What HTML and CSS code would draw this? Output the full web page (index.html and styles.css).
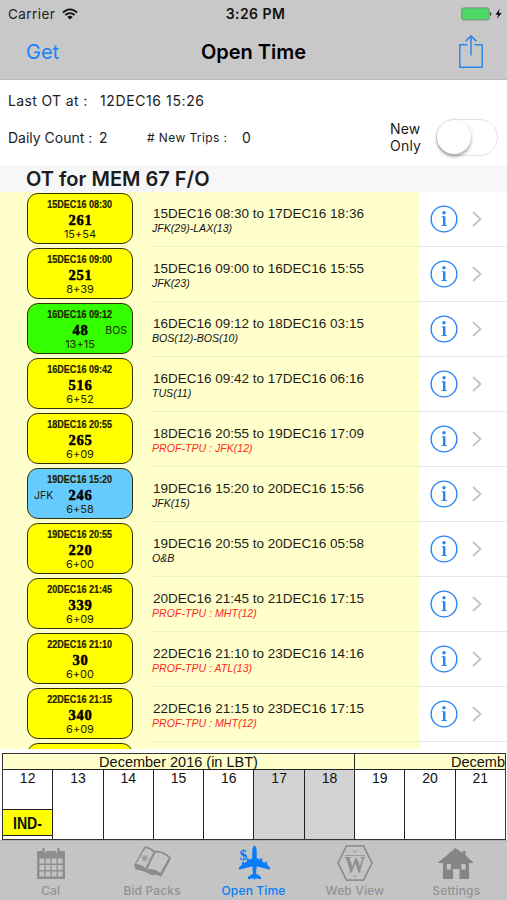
FILE: index.html
```html
<!DOCTYPE html>
<html lang="en">
<head>
    <meta charset="UTF-8">
    <meta name="viewport" content="width=device-width, initial-scale=1.0">
    <title>Open Time</title>
    <link rel="stylesheet" href="styles.css">
</head>
<body>
    <header class="top-bar">
        <div class="status-bar">
            <div class="carrier">
                <span>Carrier</span>
                <svg width="16" height="12" viewBox="0 0 16 12" fill="none" stroke="#111" stroke-width="1.9">
                    <path d="M1 4.6C5 .3 11 .3 15 4.6M3.4 7.1C6 4.4 10 4.4 12.6 7.1"/>
                    <path d="M8 11.6L5.3 8.9C6.8 7.4 9.2 7.4 10.7 8.9Z" fill="#111" stroke="none"/>
                </svg>
            </div>
            <span class="clock">3:26 PM</span>
            <div class="battery">
                <svg width="42" height="14" viewBox="0 0 42 14">
                    <rect x=".7" y=".9" width="27.4" height="12" rx="2" fill="#4bd864" stroke="#7f8a80"/>
                    <path d="M29.2 5v4c1.4-.3 1.6-3.7 0-4z" fill="#222"/>
                    <path d="M38.8 1.8L34.3 7.7h2.8L36 11.6L40.8 5.9h-3z" fill="#111"/>
                </svg>
            </div>
        </div>
        <div class="nav-bar">
            <a class="get-btn">Get</a>
            <h1>Open Time</h1>
            <a class="share-btn">
                <svg width="26" height="35" viewBox="0 0 26 35" fill="none" stroke="#2b86ec" stroke-width="1.5">
                    <path d="M9.5 9.7H1.8V32.3H24.2V9.7H16.5M13 20.5V1M7.6 6.3L13 .9L18.4 6.3"/>
                </svg>
            </a>
        </div>
    </header>

    <section class="summary">
        <div class="summary-row first">
            <span class="last-label">Last OT at :</span>
            <span class="last-value">12DEC16 15:26</span>
        </div>
        <div class="summary-row">
            <span class="daily-label">Daily Count :</span>
            <span class="daily-value">2</span>
            <span class="trips-label"># New Trips :</span>
            <span class="trips-value">0</span>
            <span class="new-only">New<br>Only</span>
            <span class="switch"><i class="knob"></i></span>
        </div>
    </section>

    <h2 class="list-title"><span>OT for MEM 67 F/O</span></h2>

    <main id="trip-list" class="trip-list"></main>

    <!-- Calendar strip -->
    <section class="calendar">
        <div class="months">
            <div class="month"><span>December 2016 (in LBT)</span></div>
            <div class="month last"><span>Decemb</span></div>
        </div>
        <div class="days">
            <div class="day">12<span class="event"><b>IND-</b></span></div>
            <div class="day">13</div>
            <div class="day">14</div>
            <div class="day">15</div>
            <div class="day">16</div>
            <div class="day weekend">17</div>
            <div class="day weekend">18</div>
            <div class="day">19</div>
            <div class="day">20</div>
            <div class="day">21</div>
        </div>
    </section>

    <nav class="tab-bar">
        <a class="tab">
            <svg width="38" height="38" viewBox="0 0 38 38">
                <path d="M5 7H33V35H5Z" fill="#8e8e8e"/>
                <path d="M11.5 4v4M26.5 4v4" stroke="#8e8e8e" stroke-width="2.2"/>
                <path d="M13.5 5v4M24.5 5v4" stroke="#c4c4c4" stroke-width="1"/>
                <g fill="#c2c2c2">
                    <path d="M7.5 14.5h4.8v5H7.5zM13.6 14.5h4.8v5h-4.8zM19.7 14.5h4.8v5h-4.8zM25.8 14.5h4.8v5h-4.800z"/>
                    <path d="M7.5 21h4.8v5H7.5zM13.6 21h4.8v5h-4.8zM19.7 21h4.8v5h-4.8zM25.8 21h4.8v5h-4.800z"/>
                    <path d="M7.5 27.500h4.8v5H7.5zM13.6 27.5h4.8v5h-4.8zM19.7 27.5h4.8v5h-4.8zM25.8 27.5h4.8v5h-4.800z"/>
                </g>
            </svg>
            <span>Cal</span>
        </a>
        <a class="tab">
            <svg width="38" height="38" viewBox="0 0 38 38" stroke-linejoin="round">
                <path d="M1 21L11.5 2.500C15 2.500 19 4 21.500 7C26 6 32 8 37.500 13V15.500L28 33C24 30.500 22 30 19.500 31.500L15.500 29.500C11 27 6 26 2.500 25.500Z" fill="#8c8c8c"/>
                <path d="M3 20L12.3 4.2C15.500 4.500 18.500 6 20.300 8.500L12.5 24C10 21.5 6 20 3 20Z" fill="#c4c4c4"/>
                <path d="M22.300 8.700C27 8 32 10.500 35.800 14L27.300 29C24 26 18.500 24.500 14.500 25.3Z" fill="#c4c4c4"/>
                <path d="M8.500 13.500L15.500 15M11 11L12.500 18M9.5 17L14.5 11.5" stroke="#999" stroke-width="1.3"/>
            </svg>
            <span>Bid Packs</span>
        </a>
        <a class="tab active">
            <svg width="38" height="38" viewBox="0 0 38 38" fill="#087dfa">
                <path d="M19.500 1.500C21 2.500 21.700 4.500 21.700 7.500V14L25 16V14.500H27.2V17.500L30 19.200V17.800H32V20.500L35 23.500V25.700L21.7 22.2L21 29.500L26 33V35.300L20.5 34.200L19.5 36.500L18.5 34.200L13 35.300V33L18 29.5L17.3 22.2L4 25.700V23.500L7 20.500V17.800H9V19.200L11.8 17.5V14.5H14V16L17.3 14V7.5C17.3 4.500 18 2.500 19.5 1.500Z"/>
                <text x="4.5" y="16" font-family="Liberation Serif, serif" font-size="15.500" font-weight="bold">$</text>
            </svg>
            <span>Open Time</span>
        </a>
        <a class="tab">
            <svg width="38" height="38" viewBox="0 0 38 38" fill="none" stroke="#8e8e8e">
                <path d="M10.5 1.8H27.5L36 19L27.5 36.2H10.5L2 19Z" stroke-width="1.7"/>
                <path d="M9 11.5H29M13 28H16M22 28H25" stroke-width=".8"/>
                <text x="19" y="27.5" text-anchor="middle" font-family="Liberation Serif, serif" font-size="24" textLength="21" lengthAdjust="spacingAndGlyphs" font-weight="bold" fill="#8e8e8e" stroke="none">W</text>
                <path d="M17 6L19 8.500L21 6M17 31L19 33L21 31" stroke-width=".9"/>
            </svg>
            <span>Web View</span>
        </a>
        <a class="tab">
            <svg width="38" height="38" viewBox="0 0 38 38" fill="#858585">
                <path fill-rule="evenodd" d="M18.500 4L25.500 9V7H28.500V11.500L37 19H32V35H22.5V25H16V35H6V19H.5ZM9.8 20V25.500H13.8V20ZM24.5 20V25.500H28.5V20Z"/>
            </svg>
            <span>Settings</span>
        </a>
    </nav>

    <script>
        const trips = [
            { start: "15DEC16 08:30", end: "17DEC16 18:36", num: "261", time: "15+54", note: "JFK(29)-LAX(13)" },
            { start: "15DEC16 09:00", end: "16DEC16 15:55", num: "251", time: "8+39", note: "JFK(23)" },
            { start: "16DEC16 09:12", end: "18DEC16 03:15", num: "48", time: "13+15", note: "BOS(12)-BOS(10)", color: "green", right: "BOS" },
            { start: "16DEC16 09:42", end: "17DEC16 06:16", num: "516", time: "6+52", note: "TUS(11)" },
            { start: "18DEC16 20:55", end: "19DEC16 17:09", num: "265", time: "6+09", note: "PROF-TPU : JFK(12)", prof: true },
            { start: "19DEC16 15:20", end: "20DEC16 15:56", num: "246", time: "6+58", note: "JFK(15)", color: "blue", left: "JFK" },
            { start: "19DEC16 20:55", end: "20DEC16 05:58", num: "220", time: "6+00", note: "O&amp;B" },
            { start: "20DEC16 21:45", end: "21DEC16 17:15", num: "339", time: "6+09", note: "PROF-TPU : MHT(12)", prof: true },
            { start: "22DEC16 21:10", end: "23DEC16 14:16", num: "30", time: "6+00", note: "PROF-TPU : ATL(13)", prof: true },
            { start: "22DEC16 21:15", end: "23DEC16 17:15", num: "340", time: "6+09", note: "PROF-TPU : MHT(12)", prof: true }
        ];

        function tripRow(t) {
            return `
                <div class="trip">
                    <div class="trip-main">
                        <div class="card ${t.color || ""}">
                            <span class="card-date">${t.start}</span>
                            <div class="card-mid">
                                <span class="city">${t.left || ""}</span>
                                <span class="card-num">${t.num}</span>
                                <span class="city">${t.right || ""}</span>
                            </div>
                            <span class="card-time">${t.time}</span>
                        </div>
                        <div class="details">
                            <p class="dates">${t.start} to ${t.end}</p>
                            <p class="note ${t.prof ? "prof" : ""}">${t.note}</p>
                        </div>
                    </div>
                    <div class="trip-actions">
                        <svg width="28" height="28" viewBox="0 0 28 28">
                            <circle cx="14" cy="14" r="12.9" fill="none" stroke="#2584f5" stroke-width="1.4"/>
                            <circle cx="14" cy="7.8" r="1.7" fill="#2584f5"/>
                            <path d="M11.7 11.3H15.4V19.900H16.700V20.900H11.7V19.9H13V12.300H11.7Z" fill="#2584f5"/>
                        </svg>
                        <svg width="10" height="16" viewBox="0 0 10 16" fill="none" stroke="#c4c4c8" stroke-width="1.9">
                            <path d="M1 1L8.5 8L1 15"/>
                        </svg>
                    </div>
                </div>`;
        }

        // the list is cut off right after the top edge of the next card
        document.getElementById("trip-list").innerHTML =
            trips.map(tripRow).join("") +
            '<div class="trip"><div class="trip-main"><div class="card"></div></div></div>';
    </script>
</body>
</html>
```

FILE: styles.css
```css
* {
    box-sizing: border-box;
}

body {
    margin: 0;
    width: 507px;
    height: 900px;
    overflow: hidden;
    display: flex;
    flex-direction: column;
    background-color: #fff;
    color: #1c1c1c;
    font-family: Inter, 'Liberation Sans', sans-serif;
}

p, h1, h2 {
    margin: 0;
}

svg {
    display: block;
    flex: none;
}

/* Status + navigation */
.top-bar {
    height: 80px;
    flex: none;
    background-color: #c8c8c8;
    border-bottom: 1px solid #b8b8b8;
}

.status-bar {
    height: 27px;
    padding: 0 4px 0 8px;
    display: grid;
    grid-template-columns: 1fr auto 1fr;
    align-items: center;
    font-size: 13.5px;
    color: #222;
}

.carrier {
    display: flex;
    align-items: center;
    gap: 7px;
    letter-spacing: 0.45px;
}

.clock {
    font-size: 14px;
    font-weight: 600;
    letter-spacing: 0.45px;
    color: #111;
}

.battery {
    justify-self: end;
}

.nav-bar {
    height: 51px;
    padding: 0 23px 0 26px;
    display: grid;
    grid-template-columns: 1fr auto 1fr;
    align-items: center;
}

.get-btn {
    font-size: 20px;
    line-height: 22px;
    margin-bottom: 2px;
    color: #1583f8;
}

.nav-bar h1 {
    font-size: 20px;
    line-height: 22px;
    margin: 0 3px 2px 0;
    font-weight: 600;
    color: #000;
}

.share-btn {
    justify-self: end;
}

/* Counts */
.summary {
    height: 85px;
    flex: none;
    padding-left: 8px;
}

.summary-row {
    height: 30px;
    display: flex;
    align-items: center;
    font-size: 14px;
}

.summary-row.first {
    height: 41px;
    margin-bottom: 1px;
}

.last-label {
    width: 92px;
    letter-spacing: 0.35px;
}

.last-value {
    letter-spacing: 0.6px;
}

.daily-label {
    width: 91px;
}

.daily-value {
    width: 48px;
}

.trips-label {
    width: 95px;
    font-size: 12px;
    letter-spacing: 0.4px;
}

.trips-value {
    width: 148px;
}

.new-only {
    width: 46px;
    line-height: 17px;
    letter-spacing: 0.2px;
}

.switch {
    width: 62px;
    height: 37px;
    border: 1.5px solid #e3e3e3;
    border-radius: 19px;
}

.knob {
    display: block;
    width: 34px;
    height: 34px;
    border-radius: 50%;
    background-color: #fff;
    box-shadow: 0 3px 3px rgba(0, 0, 0, 0.25), 0 1px 5px rgba(0, 0, 0, 0.12);
}

.list-title {
    height: 27px;
    flex: none;
    padding-left: 26px;
    background-color: #f7f7f7;
    font-size: 20px;
    font-weight: 600;
    line-height: 28px;
}

/* Trips */
.trip-list {
    height: 557px;
    flex: none;
    overflow: hidden;
}

.trip {
    height: 55px;
    display: flex;
}

.trip-main {
    width: 419px;
    padding-left: 27px;
    display: flex;
    background-color: #ffffcc;
}

.card {
    width: 106px;
    height: 51px;
    margin-top: 1px;
    border: 1.5px solid #333300;
    border-radius: 11px;
    background-color: #ffff00;
    color: #222200;
    display: flex;
    flex-direction: column;
    align-items: center;
    white-space: nowrap;
}

.card.green {
    background-color: #33ff00;
}

.card.blue {
    background-color: #66ccff;
}

.card-date {
    margin-top: 4px;
    font: bold 10.5px/13px 'Liberation Sans', sans-serif;
    -webkit-text-stroke: 0.2px;
    transform: scaleX(0.86);
}

.card-mid {
    width: 100%;
    height: 18px;
    padding: 1px 5px 0 6px;
    display: grid;
    grid-template-columns: 1fr auto 1fr;
    align-items: center;
}

.city {
    font-size: 10.5px;
    line-height: 16px;
}

.city:last-child {
    text-align: right;
}

.card-num {
    font: bold 14.5px/17px 'Liberation Serif', serif;
    color: #000;
    -webkit-text-stroke: 0.5px #000;
    letter-spacing: 0.8px;
}

.card-time {
    font-size: 11px;
    line-height: 11px;
}

.details {
    flex: 1;
    margin-left: 19px;
    padding: 14px 0 0 1px;
    border-bottom: 1px solid #eeeec8;
    font-family: 'Liberation Sans', sans-serif;
}

.dates {
    font-size: 13.5px;
    line-height: 15px;
    color: #1c1c14;
}

.note {
    margin-left: -1px;
    font-size: 10.6px;
    line-height: 14px;
    font-style: italic;
    color: #111;
}

.note.prof {
    color: #ff2a20;
}

.trip-actions {
    flex: 1;
    padding: 0 0 1px 11px;
    display: flex;
    align-items: center;
    gap: 14px;
    border-bottom: 1px solid #e6e6e6;
}

/* Calendar */
.calendar {
    width: 504px;
    height: 87px;
    flex: none;
    margin: 4px 0 0 2px;
    border: 1px solid #333;
    font-family: 'Liberation Sans', sans-serif;
    color: #111;
}

.months {
    height: 16px;
    display: flex;
    background-color: #ffffcc;
    border-bottom: 1px solid #222;
}

.month {
    width: 352px;
    flex: none;
    border-right: 1px solid #222;
    text-align: center;
    font-size: 14.5px;
    line-height: 17px;
}

.month.last {
    width: 150px;
    border-right: none;
    text-align: right;
}

.days {
    height: 69px;
    display: flex;
}

.day {
    flex: 1;
    display: flex;
    flex-direction: column;
    align-items: center;
    border-right: 1.5px solid #222;
    font-size: 14px;
    line-height: 17px;
}

.day:last-child {
    border-right: none;
}

.day.weekend {
    background-color: #d3d3d3;
}

.event {
    width: 100%;
    height: 27px;
    margin-top: 22px;
    background-color: #ffff00;
    border-top: 1px solid #222;
    border-bottom: 1px solid #222;
    text-align: center;
    font-size: 17px;
    line-height: 28px;
}

.event b {
    display: inline-block;
    transform: scaleX(0.83);
}

/* Tabs */
.tab-bar {
    flex: 1;
    display: flex;
    background-color: #c4c4c4;
    border-top: 1px solid #b0b0b0;
}

.tab {
    flex: 1;
    padding-top: 3px;
    display: flex;
    flex-direction: column;
    align-items: center;
    font-size: 12px;
    font-weight: 500;
    letter-spacing: 0.15px;
    line-height: 18px;
    color: #929292;
}

.tab.active {
    color: #087dfa;
}
```
